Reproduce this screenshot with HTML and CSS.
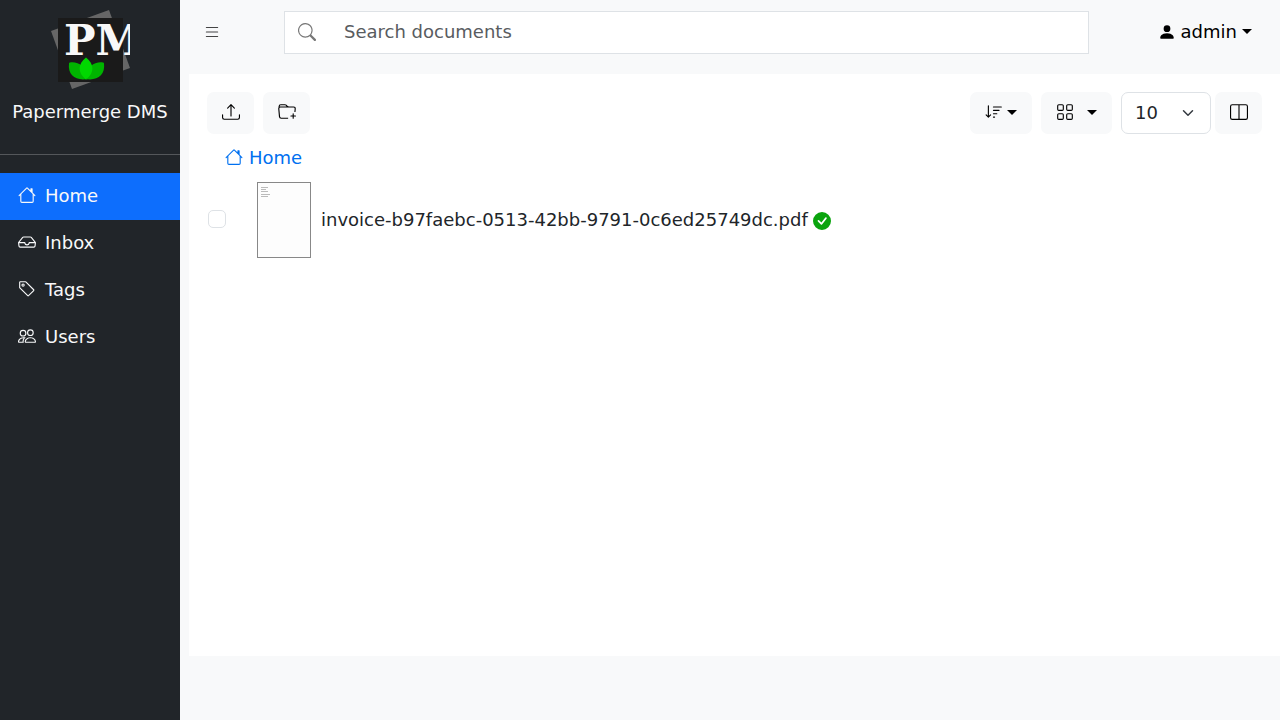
FILE: index.html
```html
<!DOCTYPE html>
<html lang="en">
<head>
<meta charset="utf-8">
<meta name="viewport" content="width=device-width, initial-scale=1">
<title>Papermerge DMS</title>
<link rel="stylesheet" href="styles.css">
</head>
<body>
<svg class="sprite" aria-hidden="true">
  <symbol id="house" viewBox="0 0 16 16"><path d="M8.707 1.5a1 1 0 0 0-1.414 0L.646 8.146a.5.5 0 0 0 .708.708L2 8.207V13.5A1.5 1.5 0 0 0 3.5 15h9a1.5 1.5 0 0 0 1.5-1.5V8.207l.646.647a.5.5 0 0 0 .708-.708L13 5.793V2.5a.5.5 0 0 0-.5-.5h-1a.5.5 0 0 0-.5.5v1.293L8.707 1.5ZM13 7.207V13.5a.5.5 0 0 1-.5.5h-9a.5.5 0 0 1-.5-.5V7.207l5-5 5 5Z"/></symbol>
</svg>
<div class="app">
  <aside class="sidebar">
    <div class="brand">
      <svg class="logo" viewBox="50 9 80 81" role="img" aria-label="PM">
        <path fill="#666" d="M51 31 109 10 130 68 72 89Z"/>
        <path fill="#1a1a1a" d="M58 18h65v64H58z"/>
        <text class="logo-text" x="64" y="55">PM</text>
        <path fill="#00b400" d="M70 62.500c8-1 16 3 17 16.500-11 2-19.500-4-18-15.500q0-1 1-1ZM103 62.500c-8-1-16 3-17 16.500 11 2 19.500-4 18-15.500q0-1-1-1Z"/>
        <path fill="#00d800" d="M86 57.500c8 6 9 15 0 22-9-7-8-16 0-22Z"/>
      </svg>
      <span class="brand-name">Papermerge DMS</span>
    </div>
    <nav class="menu">
      <a class="menu-link active" href="#"><svg class="icon"><use href="#house"/></svg>Home</a>
      <a class="menu-link" href="#"><svg class="icon" viewBox="0 0 16 16"><path d="M4.98 4a.5.5 0 0 0-.39.188L1.54 8H6a.5.5 0 0 1 .5.5 1.5 1.5 0 1 0 3 0A.5.5 0 0 1 10 8h4.46l-3.05-3.812A.5.5 0 0 0 11.02 4H4.98zm9.954 5H10.45a2.5 2.5 0 0 1-4.9 0H1.066l.32 2.562a.5.5 0 0 0 .497.438h12.234a.5.5 0 0 0 .496-.438L14.933 9zM3.809 3.563A1.5 1.5 0 0 1 4.981 3h6.038a1.5 1.5 0 0 1 1.172.563l3.7 4.625a.5.5 0 0 1 .105.374l-.39 3.124A1.5 1.5 0 0 1 14.117 13H1.883a1.5 1.5 0 0 1-1.489-1.314l-.39-3.124a.5.5 0 0 1 .106-.374l3.7-4.625z"/></svg>Inbox</a>
      <a class="menu-link" href="#"><svg class="icon" viewBox="0 0 16 16"><path d="M6 4.500a1.500 1.500 0 1 1-3 0 1.500 1.500 0 0 1 3 0zm-1 0a.5.5 0 1 0-1 0 .5.5 0 0 0 1 0z"/><path d="M2 1h4.586a1 1 0 0 1 .707.293l7 7a1 1 0 0 1 0 1.414l-4.586 4.586a1 1 0 0 1-1.414 0l-7-7A1 1 0 0 1 1 6.586V2a1 1 0 0 1 1-1zm0 5.586 7 7L13.586 9l-7-7H2v4.586z"/></svg>Tags</a>
      <a class="menu-link" href="#"><svg class="icon" viewBox="0 0 16 16"><path d="M15 14s1 0 1-1-1-4-5-4-5 3-5 4 1 1 1 1h8Zm-7.978-1A.261.261 0 0 1 7 12.996c.001-.264.167-1.03.76-1.72C8.312 10.629 9.282 10 11 10c1.717 0 2.687.63 3.24 1.276.593.69.758 1.457.76 1.72l-.008.002a.274.274 0 0 1-.014.002H7.022ZM11 7a2 2 0 1 0 0-4 2 2 0 0 0 0 4Zm3-2a3 3 0 1 1-6 0 3 3 0 0 1 6 0ZM6.936 9.28a5.88 5.88 0 0 0-1.23-.247A7.35 7.35 0 0 0 5 9c-4 0-5 3-5 4 0 .667.333 1 1 1h4.216A2.238 2.238 0 0 1 5 13c0-1.01.377-2.042 1.09-2.904.243-.294.526-.569.846-.816ZM4.92 10A5.493 5.493 0 0 0 4 13H1c0-.26.164-1.03.76-1.724.545-.636 1.492-1.256 3.16-1.275ZM1.500 5.500a3 3 0 1 1 6 0 3 3 0 0 1-6 0Zm3-2a2 2 0 1 0 0 4 2 2 0 0 0 0-4Z"/></svg>Users</a>
    </nav>
  </aside>
  <div class="page">
    <header class="topbar">
      <button class="toggle" type="button" aria-label="Toggle sidebar"><svg class="icon" viewBox="0 0 16 16"><path d="M2.500 12a.5.5 0 0 1 .5-.5h10a.5.5 0 0 1 0 1H3a.5.5 0 0 1-.5-.5zm0-4a.5.5 0 0 1 .5-.5h10a.5.5 0 0 1 0 1H3a.5.5 0 0 1-.5-.5zm0-4a.5.5 0 0 1 .5-.5h10a.5.5 0 0 1 0 1H3a.5.5 0 0 1-.5-.5z"/></svg></button>
      <form class="search" role="search">
        <label class="search-label" for="search" aria-label="Search"><svg class="icon" viewBox="0 0 16 16"><path d="M11.742 10.344a6.500 6.500 0 1 0-1.397 1.398h-.001c.03.04.062.078.098.115l3.85 3.85a1 1 0 0 0 1.415-1.414l-3.85-3.85a1.007 1.007 0 0 0-.115-.1zM12 6.500a5.500 5.500 0 1 1-11 0 5.500 5.500 0 0 1 11 0z"/></svg></label>
        <input class="search-input" id="search" type="text" placeholder="Search documents">
      </form>
      <button class="user" type="button"><svg class="icon" viewBox="0 0 16 16"><path d="M3 14s-1 0-1-1 1-4 6-4 6 3 6 4-1 1-1 1H3Zm5-6a3 3 0 1 0 0-6 3 3 0 0 0 0 6Z"/></svg><span>admin</span><svg class="caret" viewBox="0 0 10 5"><path d="M0 0h10L5 5z"/></svg></button>
    </header>
    <main class="panel">
      <div class="toolbar">
        <div class="group">
          <button class="btn" type="button" aria-label="Upload"><svg class="icon" viewBox="0 0 16 16"><path d="M.5 9.900a.5.5 0 0 1 .5.5v2.500a1 1 0 0 0 1 1h12a1 1 0 0 0 1-1v-2.500a.5.5 0 0 1 1 0v2.500a2 2 0 0 1-2 2H2a2 2 0 0 1-2-2v-2.500a.5.5 0 0 1 .5-.5z"/><path d="M7.646 1.146a.5.5 0 0 1 .708 0l3 3a.5.5 0 0 1-.708.708L8.500 2.707V11.500a.5.5 0 0 1-1 0V2.707L5.354 4.854a.5.5 0 1 1-.708-.708l3-3z"/></svg></button>
          <button class="btn" type="button" aria-label="New folder"><svg class="icon" viewBox="0 0 16 16"><path d="m.5 3 .04.87a1.990 1.990 0 0 0-.342 1.311l.637 7A2 2 0 0 0 2.826 14H9v-1H2.826a1 1 0 0 1-.995-.91l-.637-7A1 1 0 0 1 2.190 4h11.620a1 1 0 0 1 .996 1.090L14.540 8h1.005l.256-2.819A2 2 0 0 0 13.810 3H9.828a2 2 0 0 1-1.414-.586l-.828-.828A2 2 0 0 0 6.172 1H2.500a2 2 0 0 0-2 2Zm5.672-1a1 1 0 0 1 .707.293L7.586 3H2.190c-.24 0-.47.042-.683.12L1.500 2.980a1 1 0 0 1 1-.98h3.672Z"/><path d="M13.500 9a.5.5 0 0 1 .5.5V11h1.500a.5.5 0 1 1 0 1H14v1.500a.5.5 0 1 1-1 0V12h-1.500a.5.5 0 0 1 0-1H13V9.500a.5.5 0 0 1 .5-.5Z"/></svg></button>
        </div>
        <div class="group">
          <button class="btn btn-sort" type="button" aria-label="Sort"><svg class="icon" viewBox="0 0 16 16"><path d="M3.500 2.500a.5.5 0 0 0-1 0v8.793l-1.146-1.147a.5.5 0 0 0-.708.708l2 1.999.007.007a.497.497 0 0 0 .7-.006l2-2a.5.5 0 0 0-.707-.708L3.500 11.293V2.500zm3.500 1a.5.5 0 0 1 .5-.5h7a.5.5 0 0 1 0 1h-7a.5.5 0 0 1-.5-.5zM7.500 6a.5.5 0 0 0 0 1h5a.5.5 0 0 0 0-1h-5zm0 3a.5.5 0 0 0 0 1h3a.5.5 0 0 0 0-1h-3zm0 3a.5.5 0 0 0 0 1h1a.5.5 0 0 0 0-1h-1z"/></svg><svg class="caret" viewBox="0 0 10 5"><path d="M0 0h10L5 5z"/></svg></button>
          <button class="btn btn-view" type="button" aria-label="View mode"><svg class="icon" viewBox="0 0 16 16"><g fill="none" stroke="currentColor"><rect x="1.500" y="1.500" width="5" height="5" rx="1"/><rect x="9.500" y="1.500" width="5" height="5" rx="1"/><rect x="1.500" y="9.500" width="5" height="5" rx="1"/><rect x="9.500" y="9.500" width="5" height="5" rx="1"/></g></svg><svg class="caret" viewBox="0 0 10 5"><path d="M0 0h10L5 5z"/></svg></button>
          <div class="paging">
            <div class="select-wrap">
              <select class="select" aria-label="Items per page"><option>5</option><option selected>10</option><option>15</option></select>
              <svg class="chevron" viewBox="0 0 16 16"><path fill="none" stroke="#343a40" stroke-linecap="round" stroke-linejoin="round" stroke-width="2" d="m2 5 6 6 6-6"/></svg>
            </div>
            <button class="btn" type="button" aria-label="Split view"><svg class="icon" viewBox="0 0 16 16"><path d="M0 3a2 2 0 0 1 2-2h12a2 2 0 0 1 2 2v10a2 2 0 0 1-2 2H2a2 2 0 0 1-2-2V3zm8.500-1v12H14a1 1 0 0 0 1-1V3a1 1 0 0 0-1-1H8.500zm-1 0H2a1 1 0 0 0-1 1v10a1 1 0 0 0 1 1h5.500V2z"/></svg></button>
          </div>
        </div>
      </div>
      <nav class="breadcrumb" aria-label="Breadcrumb"><a class="crumb" href="#"><svg class="icon"><use href="#house"/></svg>Home</a></nav>
      <div class="document">
        <input class="check" id="doc" type="checkbox">
        <svg class="thumb" viewBox="0 0 52 74"><g stroke="#bbb" stroke-width="1"><path d="M3 4.500h7M3 6.500h5M3 8.500h7M3 11.500h9M3 13.500h7"/></g></svg>
        <label class="doc-name" for="doc">invoice-b97faebc-0513-42bb-9791-0c6ed25749dc.pdf</label>
        <svg class="icon done" viewBox="0 0 16 16"><path d="M16 8A8 8 0 1 1 0 8a8 8 0 0 1 16 0zm-3.970-3.030a.75.75 0 0 0-1.080.022L7.477 9.417 5.384 7.323a.75.75 0 0 0-1.060 1.060L6.970 11.030a.75.75 0 0 0 1.079-.020l3.992-4.990a.75.75 0 0 0-.010-1.050z"/></svg>
      </div>
    </main>
  </div>
</div>
</body>
</html>
```
FILE: styles.css
```css
* { box-sizing: border-box; }
body {
  margin: 0;
  background: #f8f9fa;
  color: #212529;
  font: 18px/27px "DejaVu Sans", sans-serif;
}
button, input, select { font: inherit; color: inherit; margin: 0; }
a { text-decoration: none; }
.sprite { display: none; }
.icon { width: 18px; height: 18px; fill: currentColor; flex: none; }
.app { display: flex; min-height: 100vh; }

.sidebar { flex: 0 0 180px; background: #212529; color: #f8f9fa; }
.brand {
  display: flex;
  flex-direction: column;
  align-items: center;
  gap: 8px;
  padding: 9px 0 29px;
  border-bottom: 1px solid #54575a;
  white-space: nowrap;
}
.logo { width: 80px; height: 81px; }
.logo-text { font: bold 42px "DejaVu Serif", serif; fill: #f8f8f8; }
.menu { padding-top: 18px; }
.menu-link {
  display: flex;
  align-items: center;
  gap: 9px;
  padding: 9px 18px 11px;
  color: #f8f9fa;
}
.menu-link .icon { margin-bottom: 2px; }
.menu-link.active { background: #0d6efd; }

.page { flex: 1; min-width: 0; padding-left: 9px; }
.topbar {
  display: grid;
  grid-template-columns: 95px minmax(0, 1fr) 191px;
  padding: 11px 0 20px;
}
.toggle, .user {
  display: flex;
  align-items: center;
  padding: 0 0 2px;
  border: 0;
  background: none;
}
.toggle { padding-left: 14px; color: #444; }
.user { justify-content: flex-end; padding-right: 28px; color: #000; gap: 5px; }
.search { display: flex; height: 43px; background: #fff; border: 1px solid #dee2e6; }
.search-label { display: flex; align-items: center; padding: 0 14px 2px 13px; color: #777; }
.search-input { flex: 1; min-width: 0; border: 0; background: none; padding: 0 15px 2px 14px; outline: 0; }
.search-input::placeholder { color: #595c5f; opacity: 1; }
.caret { width: 10px; height: 5px; fill: currentColor; }

.panel { min-height: calc(100vh - 138px); padding: 18px; background: #fff; }
.toolbar { display: flex; justify-content: space-between; }
.group { display: flex; gap: 9px; }
.btn {
  display: flex;
  align-items: center;
  justify-content: center;
  gap: 5px;
  min-width: 47px;
  height: 42px;
  padding: 0 14px 2px;
  border: 0;
  border-radius: 7px;
  background: #f8f9fa;
  color: #000;
}
.btn-sort { gap: 4px; padding: 0 15px 2px; }
.btn-view { gap: 13px; padding: 0 15px 2px; }
.paging { display: flex; gap: 4px; }
.select-wrap { display: grid; align-items: center; }
.select {
  grid-area: 1 / 1;
  width: 90px;
  height: 42px;
  padding: 0 13px 2px;
  appearance: none;
  border: 1px solid #dee2e6;
  border-radius: 7px;
  background: #fff;
}
.chevron { grid-area: 1 / 1; justify-self: end; width: 12px; height: 12px; margin-right: 17px; pointer-events: none; }
.breadcrumb { padding: 10px 18px 11px; }
.crumb { display: flex; align-items: center; gap: 6px; color: #0070f0; }
.crumb .icon { margin-bottom: 2px; }
.document { display: flex; align-items: center; }
.check {
  width: 18px;
  height: 18px;
  margin: 0 31px 2px 1px;
  appearance: none;
  border: 1px solid #dee2e6;
  border-radius: 5px;
  background: #fff;
}
.thumb { width: 54px; height: 76px; border: 1px solid #888; background: #fdfdfd; }
.doc-name { margin: 0 5px 1px 10px; }
.done { color: #0aa40e; margin-top: 2px; }
```
